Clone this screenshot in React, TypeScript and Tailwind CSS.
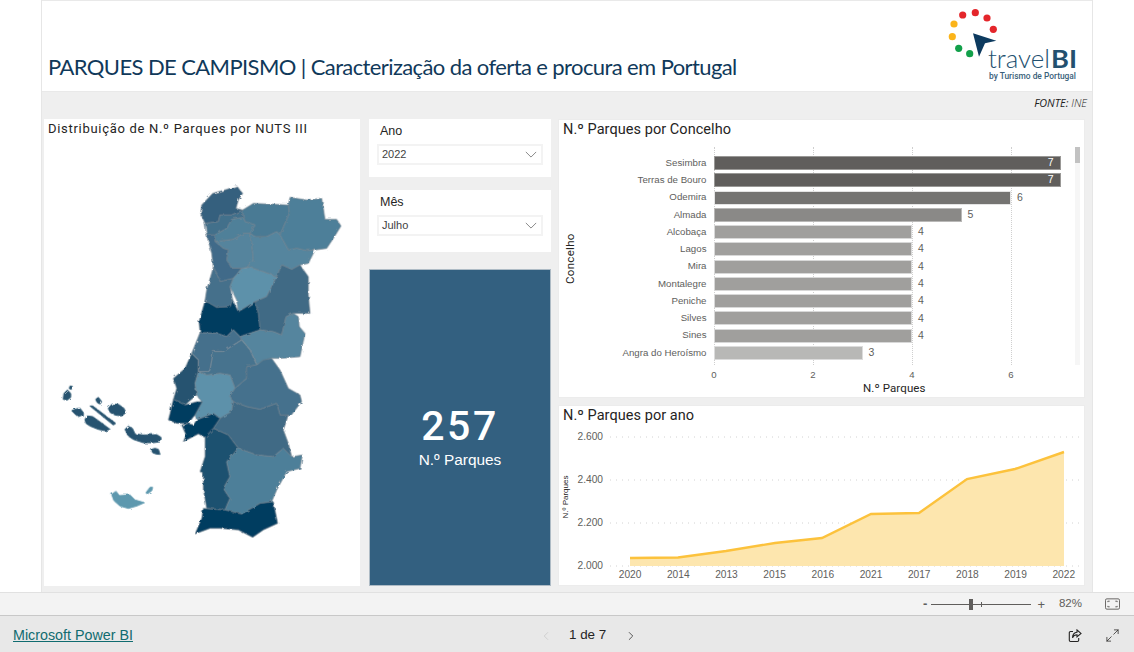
import { ChevronLeft, ChevronRight, Maximize2 } from "lucide-react";

const din = "font-['Roboto',sans-serif]";
const seg = "font-['Liberation_Sans',sans-serif]";

const bars = [
  { name: "Sesimbra", value: 7, color: "bg-[#605e5c]", border: "border-[#999896]" },
  { name: "Terras de Bouro", value: 7, color: "bg-[#605e5c]", border: "border-[#999896]" },
  { name: "Odemira", value: 6, color: "bg-[#757472]", border: "border-[#e4e4e4]" },
  { name: "Almada", value: 5, color: "bg-[#8a8987]", border: "border-[#b9b8b7]" },
  { name: "Alcobaça", value: 4, color: "bg-[#a09f9d]", border: "border-[#d8d8d8]" },
  { name: "Lagos", value: 4, color: "bg-[#a09f9d]", border: "border-[#d8d8d8]" },
  { name: "Mira", value: 4, color: "bg-[#a09f9d]", border: "border-[#d8d8d8]" },
  { name: "Montalegre", value: 4, color: "bg-[#a09f9d]", border: "border-[#d8d8d8]" },
  { name: "Peniche", value: 4, color: "bg-[#a09f9d]", border: "border-[#d8d8d8]" },
  { name: "Silves", value: 4, color: "bg-[#a09f9d]", border: "border-[#d8d8d8]" },
  { name: "Sines", value: 4, color: "bg-[#a09f9d]", border: "border-[#d8d8d8]" },
  { name: "Angra do Heroísmo", value: 3, color: "bg-[#b8b8b6]", border: "border-[#dcdcdc]" },
];

// regiões do continente, coordenadas em escala 3x
const northRegions: [string, string][] = [
  ["#36607e", "560,18 578,40 565,60 558,85 578,90 545,105 510,105 505,125 465,130 452,100 455,75 488,40 530,28"],
  ["#426f8b", "465,130 505,125 510,105 545,105 578,90 580,112 545,118 530,145 495,165 470,165"],
  ["#4a7a94", "578,90 610,70 650,72 715,75 718,100 705,130 690,165 680,155 650,170 615,170 600,160 615,135 585,125 580,112"],
  ["#4d7f99", "715,75 720,52 770,60 815,55 820,85 825,118 860,118 873,138 850,175 830,205 795,210 770,212 740,205 715,210 690,165 705,130 718,100"],
  ["#4f8099", "545,118 580,112 585,125 615,135 600,160 580,160 550,178 495,185 495,165 530,145"],
  ["#55849d", "550,178 580,160 600,160 605,190 610,240 590,262 575,265 545,265 530,240 535,210 520,205 495,185"],
  ["#3f6b89", "470,165 495,165 495,185 520,205 535,210 530,240 545,265 575,265 550,295 510,305 500,280 490,262 485,220"],
  ["#55859e", "600,160 615,170 650,170 680,155 690,165 715,210 740,205 770,212 795,210 775,250 750,255 725,268 695,255 680,290 640,275 600,262 590,262 610,240 605,190"],
  ["#446f8b", "490,262 500,280 510,305 550,295 540,320 548,360 540,380 500,382 465,362 470,330"],
  ["#5d91aa", "575,265 600,262 640,275 680,290 665,320 650,350 615,365 565,395 560,360 540,320 550,295"],
  ["#3f6a85", "695,255 725,268 750,255 775,290 775,345 780,400 730,400 708,410 695,465 670,455 630,450 625,400 615,365 650,350 665,320 680,290"],
  ["#053d60", "465,362 500,382 540,380 548,360 565,395 615,365 625,400 630,450 570,470 550,450 530,470 500,460 450,458 447,425"],
  ["#55859e", "730,400 745,410 748,440 765,460 750,530 690,535 665,535 620,555 600,510 575,480 570,470 630,450 670,455 695,465 708,410"],
  ["#45708c", "450,458 500,460 530,470 550,450 570,470 575,480 520,515 490,515 480,570 475,575 445,575 445,540 425,520"],
];

const southRegions: [string, string][] = [
  ["#46738e", "490,-25 520,-25 575,-60 600,-30 620,15 590,20 590,55 555,85 540,45 510,40 470,45 445,35 475,35 480,30"],
  ["#26536f", "425,-20 445,0 445,35 435,70 440,105 405,135 370,118 380,85 370,55 405,25"],
  ["#5d91aa", "445,35 470,45 510,40 540,45 555,85 540,108 550,125 545,155 565,170 510,175 490,160 440,180 435,165 455,125 440,105 435,70"],
  ["#44718d", "620,15 640,0 665,-5 690,30 715,85 750,105 755,125 720,170 715,165 690,165 680,130 630,148 590,140 550,125 540,108 555,85 590,55 590,20"],
  ["#3f6a85", "550,125 590,140 630,148 680,130 690,165 715,165 700,210 715,250 725,290 700,265 670,290 620,285 565,265 535,225 490,205 510,175 545,155"],
  ["#1f5170", "465,232 490,205 535,225 565,265 530,305 540,350 520,385 540,415 525,450 470,445 460,390 460,340 450,335 465,290"],
  ["#4d7f99", "565,265 620,285 670,290 700,265 725,290 757,285 750,325 710,335 680,390 665,425 630,430 575,462 525,450 540,415 520,385 540,350 530,305"],
  ["#053d60", "460,445 525,450 575,462 630,430 670,425 683,490 640,510 608,532 565,510 510,505 480,505 435,522 455,475"],
  ["#053d60", "370,118 405,135 440,125 457,125 435,165 415,190 380,190 355,180 360,160"],
  ["#053d60", "395,195 415,190 430,195 440,180 490,160 510,175 490,205 465,232 445,222 400,245 408,225"],
];

const islands: [string, string][] = [
  ["#26536f", "60,78 68,80 64,88 58,86"],
  ["#26536f", "40,118 42,100 52,90 62,100 62,112 52,120"],
  ["#26536f", "137,118 145,112 155,125 150,132 142,128"],
  ["#26536f", "175,145 185,133 205,133 222,145 227,158 215,168 195,165 180,157"],
  ["#26536f", "65,152 78,147 90,145 100,158 100,168 90,172 78,165"],
  ["#26536f", "120,138 128,138 197,190 190,195"],
  ["#26536f", "105,178 112,168 128,170 145,182 180,208 165,212 145,208 120,198 108,190"],
  ["#26536f", "225,208 235,199 247,205 255,222 280,225 320,224 333,232 332,245 310,248 280,248 250,238 235,228"],
  ["#26536f", "305,268 315,265 325,268 330,283 318,282 308,278"],
  ["#5d98ae", "185,403 198,394 208,407 240,405 255,420 283,428 260,438 235,445 210,438 192,422"],
  ["#5d98ae", "288,398 300,382 308,382 305,392 292,402"],
];

function PortugalMap() {
  return (
    <svg viewBox="0 0 948 1401" className="absolute inset-0 h-full w-full">
      <defs>
        <filter id="rough" x="-5%" y="-5%" width="110%" height="110%">
          <feTurbulence type="fractalNoise" baseFrequency="0.07" numOctaves="2" seed="4" />
          <feDisplacementMap in="SourceGraphic" scale="9" />
        </filter>
      </defs>
      <g filter="url(#rough)">
        <g transform="translate(18 183)">
          {northRegions.map(([fill, points], i) => (
            <polygon key={i} points={points} fill={fill} stroke="#6f7f8b" strokeWidth="2" strokeLinejoin="round" />
          ))}
        </g>
        <g transform="translate(18 723)">
          {southRegions.map(([fill, points], i) => (
            <polygon key={i} points={points} fill={fill} stroke="#6f7f8b" strokeWidth="2" strokeLinejoin="round" />
          ))}
          {islands.map(([fill, points], i) => (
            <polygon key={i} points={points} fill={fill} stroke={fill} strokeWidth="3" strokeLinejoin="round" />
          ))}
        </g>
      </g>
    </svg>
  );
}

function Logo() {
  return (
    <svg viewBox="945 5 142 82" className="h-[82px] w-[142px]">
      <circle cx="963.7" cy="15" r="3.6" fill="#e4262b" />
      <circle cx="976.3" cy="12.7" r="3.6" fill="#e4262b" />
      <circle cx="988" cy="18" r="3.6" fill="#e4262b" />
      <circle cx="994.3" cy="29.3" r="3.6" fill="#e4262b" />
      <circle cx="955" cy="24" r="3.6" fill="#fbb41a" />
      <circle cx="953.3" cy="36.7" r="3.6" fill="#fbb41a" />
      <circle cx="959.7" cy="48.3" r="3.6" fill="#12a04a" />
      <circle cx="970.7" cy="53.7" r="3.6" fill="#12a04a" />
      <polygon points="974,33.3 997.3,40.7 986,43.3 980,56.7" fill="#0d3a5f" />
      <text x="989" y="68" fontSize="25" fontFamily="Lato, sans-serif" fontWeight="300" fill="#23506f" textLength="62" lengthAdjust="spacingAndGlyphs">
        travel
      </text>
      <text x="1052" y="68" fontSize="25" fontFamily="Lato, sans-serif" fontWeight="700" fill="#23506f" textLength="26" lengthAdjust="spacingAndGlyphs">
        BI
      </text>
      <text x="990" y="79" fontSize="8.4" fontFamily="Roboto, sans-serif" fontWeight="500" fill="#3a5f7a" textLength="87" lengthAdjust="spacingAndGlyphs">
        by Turismo de Portugal
      </text>
    </svg>
  );
}

function Slicer({ label, value, className }: { label: string; value: string; className: string }) {
  return (
    <div className={`bg-white pl-2 pr-2 ${className}`}>
      <div className={`${seg} pl-[3px] text-[12.5px] leading-[16px] text-[#252423]`}>{label}</div>
      <div className="mt-[5px] flex h-[21px] items-center justify-between border-2 border-[#f3f3f3] pl-[3px] pr-[4px]">
        <span className={`${seg} text-[11px] text-[#3f3f3f]`}>{value}</span>
        <svg viewBox="0 0 14 8" className="h-[7px] w-[12px]" fill="none" stroke="#666" strokeWidth="0.9">
          <path d="M1 1l6 6 6-6" />
        </svg>
      </div>
    </div>
  );
}

function BarChart() {
  return (
    <div className="relative mt-[8px] flex h-[246px]">
      <div className="relative w-[17px] shrink-0">
        <span className={`${din} absolute left-[-18px] top-[103px] -rotate-90 text-[11.5px] tracking-[0.3px] text-[#252423]`}>Concelho</span>
      </div>
      <div className="relative ml-[134px] w-[347px]">
        {/* grelha */}
        {[0, 99, 198, 297].map((x) => (
          <div key={x} className="absolute top-0 h-[218px] border-l border-dotted border-[#cfcfcf]" style={{ left: x }} />
        ))}
        <div className="relative flex flex-col pt-[7.4px]">
          {bars.map((b) => (
            <div key={b.name} className="flex h-[17.27px] items-center">
              <span className={`${seg} absolute right-[354px] whitespace-nowrap text-[9.7px] text-[#605e5c]`}>{b.name}</span>
              <div
                className={`flex h-[14px] items-center justify-end border ${b.color} ${b.border}`}
                style={{ width: b.value * 49.5 }}
              >
                {b.value === 7 && <span className={`${seg} pr-[6px] text-[10.5px] text-white`}>7</span>}
              </div>
              {b.value < 7 && <span className={`${seg} ml-[6px] text-[10.5px] text-[#605e5c]`}>{b.value}</span>}
            </div>
          ))}
        </div>
        {/* eixo */}
        {[0, 2, 4, 6].map((v) => (
          <span key={v} className={`${seg} absolute top-[221px] -translate-x-1/2 text-[9.6px] text-[#605e5c]`} style={{ left: v * 49.5 }}>
            {v}
          </span>
        ))}
        <span className={`${din} absolute left-[149px] top-[233px] text-[11.5px] tracking-[0.1px] text-[#252423]`}>N.º Parques</span>
      </div>
      {/* scrollbar */}
      <div className="ml-[14px] h-[218px] w-[6px] bg-[#f6f6f6]">
        <div className="h-[16px] bg-[#c2c2c2]" />
      </div>
    </div>
  );
}

const years = ["2020", "2014", "2013", "2015", "2016", "2021", "2017", "2018", "2019", "2022"];
const ticks = ["2.600", "2.400", "2.200", "2.000"];

function LineChart() {
  return (
    <div className="relative ml-[6px] mt-[3px] flex h-[158px]">
      <div className="relative w-[10px] shrink-0">
        <span className={`${seg} absolute left-[-20px] top-[63px] -rotate-90 whitespace-nowrap text-[8px] font-light text-[#252423]`}>N.º Parques</span>
      </div>
      <div className="ml-[-1px] flex h-[144px] w-[29px] flex-col justify-between pt-[3px]">
        {ticks.map((t) => (
          <span key={t} className={`${seg} text-right text-[10.2px] leading-[12px] text-[#605e5c]`}>{t}</span>
        ))}
      </div>
      <div className="relative ml-[7px] w-[472px]">
        <svg viewBox="610 428 472 140" className="absolute left-0 top-[1px] h-[140px] w-[472px]">
          {[436, 479, 522, 565].map((y) => (
            <line key={y} x1="610" x2="1080" y1={y} y2={y} stroke="#d2d2d2" strokeDasharray="1 5" />
          ))}
          <polygon
            points="630,565 630,557 678,556.5 726,550 775,542 822,537 871,513 919,512 967,478 1015,468 1064,451 1064,565"
            fill="#fde6ae"
          />
          <polyline
            points="630,557 678,556.5 726,550 775,542 822,537 871,513 919,512 967,478 1015,468 1064,451"
            fill="none"
            stroke="#fcc23c"
            strokeWidth="2.4"
          />
        </svg>
        <div className="absolute left-[20px] top-[141px] flex">
          {years.map((y) => (
            <span key={y} className={`${seg} w-[48.2px] -translate-x-[24px] text-center text-[10.2px] leading-[12px] text-[#605e5c]`}>{y}</span>
          ))}
        </div>
      </div>
    </div>
  );
}

export default function App() {
  return (
    <div className="flex h-[652px] w-[1134px] flex-col overflow-hidden bg-white">
      <div className="flex h-[592px] px-[41px]">
        <main className="w-[1052px] border-x border-[#e6e6e6] bg-[#efefef]">
          {/* Cabeçalho */}
          <header className="flex h-[92px] items-end justify-between border-y border-[#e9e9e9] bg-white pl-[6px] pr-[6px]">
            <h1 className="mb-[9px] whitespace-nowrap font-['Lato',sans-serif] text-[22px] font-normal leading-[30px] tracking-[-0.6px] text-[#10395a]">
              PARQUES DE CAMPISMO | Caracterização da oferta e procura em Portugal
            </h1>
            <div className="mb-[4px]">
              <Logo />
            </div>
          </header>
          <div className="flex h-[27px] justify-end pr-[5px] pt-[4px]">
            <span className="font-['Open_Sans',sans-serif] text-[10.8px] italic leading-[14px] text-[#222]">
              FONTE: <span className="font-light">INE</span>
            </span>
          </div>

          <div className="flex h-[467px] pl-[2px]">
            {/* Mapa */}
            <section className="relative w-[316px] bg-white">
              <h2 className={`${din} relative z-10 pl-[4px] pt-[1px] text-[13px] leading-[17px] tracking-[0.7px] text-[#252423]`}>
                Distribuição de N.º Parques por NUTS III
              </h2>
              <PortugalMap />
            </section>

            {/* Filtros e total */}
            <div className="ml-[9px] flex w-[182px] flex-col">
              <Slicer label="Ano" value="2022" className="h-[58px] pt-[4px]" />
              <Slicer label="Mês" value="Julho" className="mt-[13px] h-[62px] pt-[4px]" />
              <div className="mt-[17px] flex flex-1 flex-col items-center justify-center border border-[#aebbc5] bg-[#336080] pt-[17px] text-white">
                <span className={`${din} text-[41px] font-medium leading-[46px] tracking-[2.5px]`}>257</span>
                <span className={`${seg} mt-[2px] text-[15.4px] leading-[18px]`}>N.º Parques</span>
              </div>
            </div>

            {/* Gráficos */}
            <div className="ml-[7px] flex w-[527px] flex-col">
              <section className="h-[279px] border border-[#ececec] bg-white px-[4px]">
                <h2 className={`${din} pt-[1px] text-[14.5px] leading-[18px] tracking-[0.05px] text-[#252423]`}>N.º Parques por Concelho</h2>
                <BarChart />
              </section>
              <section className="mt-[7px] h-[181px] border border-[#ececec] bg-white">
                <h2 className={`${din} pl-[4px] pt-[1px] text-[14.5px] leading-[18px] tracking-[0.05px] text-[#252423]`}>N.º Parques por ano</h2>
                <LineChart />
              </section>
            </div>
          </div>
        </main>
      </div>

      {/* Barra de zoom */}
      <div className="flex h-[23px] items-center justify-end border-t border-[#e1e1e1] bg-[#f3f3f3] pr-[14px]">
        <span className={`${seg} text-[13px] font-bold text-[#605e5c]`}>-</span>
        <div className="relative ml-[4px] h-[1px] w-[100px] bg-[#605e5c]">
          <div className="absolute left-[38px] top-[-5px] h-[11px] w-[4px] bg-[#605e5c]" />
          <div className="absolute left-[50px] top-[-2px] h-[5px] w-[1px] bg-[#605e5c]" />
        </div>
        <span className={`${seg} ml-[6px] text-[13px] leading-none text-[#605e5c]`}>+</span>
        <span className={`${seg} ml-[14px] text-[11.5px] text-[#605e5c]`}>82%</span>
        <svg viewBox="0 0 16 12" className="ml-[23px] h-[12px] w-[15px]" fill="none" stroke="#605e5c">
          <rect x="0.5" y="0.5" width="15" height="11" rx="1.5" />
          <path d="M3 4V3h2M11 3h2v1M3 8v1h2M11 9h2V8" />
        </svg>
      </div>

      {/* Rodapé */}
      <footer className="relative flex h-[37px] items-center justify-between border-t border-[#c8c8c8] bg-[#e8e8e8] pl-[13px] pr-[14px] pt-[3px]">
        <a className={`${seg} text-[14.3px] text-[#106c70] underline`}>Microsoft Power BI</a>
        <div className="absolute left-[539px] top-[3px] flex h-[33px] items-center">
          <ChevronLeft size={14} strokeWidth={1.2} className="text-[#c4c4c4]" />
          <span className={`${seg} ml-[16px] text-[13.4px] text-[#252423]`}>1 de 7</span>
          <ChevronRight size={14} strokeWidth={1.5} className="ml-[18px] text-[#444]" />
        </div>
        <div className="flex items-center">
          <svg viewBox="0 0 14 14" className="h-[14px] w-[14px]" fill="none" stroke="#252423" strokeWidth="1.1">
            <path d="M5 2.5H2.5a1.2 1.2 0 0 0-1.2 1.2v7.6a1.2 1.2 0 0 0 1.2 1.2h7a1.2 1.2 0 0 0 1.2-1.2V9" />
            <path d="M9 1l4 3.4-4 3.4V5.8C6.7 5.8 5.3 6.8 4.5 8.8 4.6 5.8 6.4 3.4 9 3.2z" />
          </svg>
          <Maximize2 size={15} strokeWidth={1.2} className="ml-[23px] text-[#252423]" />
        </div>
      </footer>
    </div>
  );
}
